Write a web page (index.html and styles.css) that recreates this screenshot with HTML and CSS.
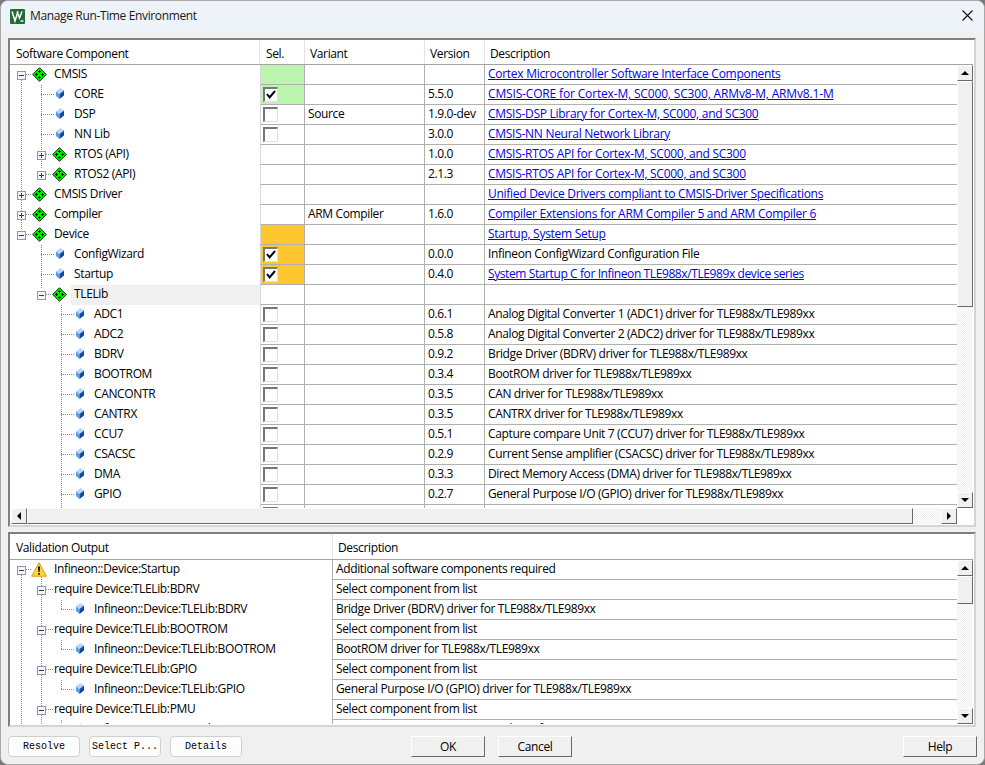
FILE: index.html
```html
<!DOCTYPE html>
<html lang="en">
<head>
<meta charset="utf-8">
<title>Manage Run-Time Environment</title>
<link rel="stylesheet" href="styles.css">
</head>
<body>
<svg class="defs" width="0" height="0" aria-hidden="true">
  <symbol id="dia" viewBox="0 0 15 15">
    <path d="M7.5 .7 14.3 7.5 7.5 14.3 .7 7.5Z" fill="#00f000" stroke="#0a2a0a" stroke-width="1"/>
    <path d="M7 3h1v1h1v1H8v1H7V5H6V4h1ZM7 9h1v1h1v1H8v1H7v-1H6v-1h1ZM4 6h1v1h1v1H5v1H4V8H3V7h1ZM10 6h1v1h1v1h-1v1h-1V8H9V7h1Z" fill="#000"/>
  </symbol>
  <symbol id="leaf" viewBox="0 0 8 11">
    <path d="M4.5 0 8 2.5 3.5 6 0 3.5Z" fill="#b4d8fa"/>
    <path d="M0 3.5 3.5 6V11L0 8Z" fill="#5c9de8"/>
    <path d="M8 2.5 3.5 6V11L8 7.5Z" fill="#1547a8"/>
  </symbol>
  <symbol id="minus" viewBox="0 0 9 9">
    <rect x=".5" y=".5" width="8" height="8" fill="#f4f6fa" stroke="#8d97ad"/>
    <path d="M2 4.5H7" stroke="#2a3a70"/>
  </symbol>
  <symbol id="plus" viewBox="0 0 9 9">
    <rect x=".5" y=".5" width="8" height="8" fill="#f4f6fa" stroke="#8d97ad"/>
    <path d="M2 4.5H7M4.5 2V7" stroke="#2a3a70"/>
  </symbol>
  <symbol id="warn" viewBox="0 0 16 15">
    <path d="M8 .8 15.4 14.2H.6Z" fill="#fdd835" stroke="#d59a1c" stroke-linejoin="round"/>
    <path d="M7 4.5h2L8.6 10H7.4ZM7.2 11h1.6v1.7H7.2Z" fill="#000"/>
  </symbol>
  <symbol id="chk" viewBox="0 0 10 9">
    <path d="M1 4 3.6 7.4 9 1" fill="none" stroke="#000" stroke-width="2"/>
  </symbol>
</svg>

<div class="window">
  <header class="titlebar">
    <svg class="applogo" viewBox="0 0 15 15" width="15" height="15" aria-hidden="true">
      <rect width="15" height="15" rx="1" fill="#256b34"/>
      <path d="M2 2.5 5 12 8 2.5M7 2.5 9.5 9 12 2.5" fill="none" stroke="#fff" stroke-width="1.5"/>
      <path d="M10.5 12h3" stroke="#dfe" stroke-width="1.4"/>
    </svg>
    <span class="title">Manage Run-Time Environment</span>
    <svg class="close" viewBox="0 0 11 11" width="11" height="11" aria-hidden="true"><path d="M.5 .5 10.5 10.5M10.5 .5 .5 10.5" stroke="#111" stroke-width="1.1"/></svg>
  </header>

  <section class="panel panel-top">
    <div class="row head head-top">
      <div class="hc c-tree">Software Component</div>
      <div class="hc c-sel">Sel.</div>
      <div class="hc c-var">Variant</div>
      <div class="hc c-ver">Version</div>
      <div class="hc c-desc">Description</div>
    </div>
    <div class="body">
      <div class="list">
        <svg class="guides" width="250" height="443" aria-hidden="true">
          <path d="M11.5 15V164M31.5 20V104M31.5 180V224M51.5 240V443M31 29.5H45M31 49.5H45M31 69.5H45M31 189.5H45M31 209.5H45M51 249.5H65M51 269.5H65M51 289.5H65M51 309.5H65M51 329.5H65M51 349.5H65M51 369.5H65M51 389.5H65M51 409.5H65M51 429.5H65M16 9.5H22M16 129.5H22M16 149.5H22M16 169.5H22M36 89.5H42M36 109.5H42M36 229.5H42"/>
        </svg>

        <div class="row">
          <div class="tree l0"><svg class="exp"><use href="#minus"/></svg><svg class="dia"><use href="#dia"/></svg><span class="lbl">CMSIS</span></div>
          <div class="sel green"></div><div class="var"></div><div class="ver"></div>
          <div class="desc"><a href="#">Cortex Microcontroller Software Interface Components</a></div>
        </div>
        <div class="row">
          <div class="tree l1leaf"><svg class="leaf"><use href="#leaf"/></svg><span class="lbl">CORE</span></div>
          <div class="sel green"><span class="cb on"><svg><use href="#chk"/></svg></span></div><div class="var"></div><div class="ver">5.5.0</div>
          <div class="desc"><a href="#" class="wide">CMSIS-CORE for Cortex-M, SC000, SC300, ARMv8-M, ARMv8.1-M</a></div>
        </div>
        <div class="row">
          <div class="tree l1leaf"><svg class="leaf"><use href="#leaf"/></svg><span class="lbl">DSP</span></div>
          <div class="sel"><span class="cb"></span></div><div class="var">Source</div><div class="ver">1.9.0-dev</div>
          <div class="desc"><a href="#">CMSIS-DSP Library for Cortex-M, SC000, and SC300</a></div>
        </div>
        <div class="row">
          <div class="tree l1leaf"><svg class="leaf"><use href="#leaf"/></svg><span class="lbl">NN Lib</span></div>
          <div class="sel"><span class="cb"></span></div><div class="var"></div><div class="ver">3.0.0</div>
          <div class="desc"><a href="#">CMSIS-NN Neural Network Library</a></div>
        </div>
        <div class="row">
          <div class="tree l1"><svg class="exp"><use href="#plus"/></svg><svg class="dia"><use href="#dia"/></svg><span class="lbl">RTOS (API)</span></div>
          <div class="sel"></div><div class="var"></div><div class="ver">1.0.0</div>
          <div class="desc"><a href="#">CMSIS-RTOS API for Cortex-M, SC000, and SC300</a></div>
        </div>
        <div class="row">
          <div class="tree l1"><svg class="exp"><use href="#plus"/></svg><svg class="dia"><use href="#dia"/></svg><span class="lbl">RTOS2 (API)</span></div>
          <div class="sel"></div><div class="var"></div><div class="ver">2.1.3</div>
          <div class="desc"><a href="#">CMSIS-RTOS API for Cortex-M, SC000, and SC300</a></div>
        </div>
        <div class="row">
          <div class="tree l0"><svg class="exp"><use href="#plus"/></svg><svg class="dia"><use href="#dia"/></svg><span class="lbl">CMSIS Driver</span></div>
          <div class="sel"></div><div class="var"></div><div class="ver"></div>
          <div class="desc"><a href="#">Unified Device Drivers compliant to CMSIS-Driver Specifications</a></div>
        </div>
        <div class="row">
          <div class="tree l0"><svg class="exp"><use href="#plus"/></svg><svg class="dia"><use href="#dia"/></svg><span class="lbl">Compiler</span></div>
          <div class="sel"></div><div class="var">ARM Compiler</div><div class="ver">1.6.0</div>
          <div class="desc"><a href="#">Compiler Extensions for ARM Compiler 5 and ARM Compiler 6</a></div>
        </div>
        <div class="row">
          <div class="tree l0"><svg class="exp"><use href="#minus"/></svg><svg class="dia"><use href="#dia"/></svg><span class="lbl">Device</span></div>
          <div class="sel orange"></div><div class="var"></div><div class="ver"></div>
          <div class="desc"><a href="#">Startup, System Setup</a></div>
        </div>
        <div class="row">
          <div class="tree l1leaf"><svg class="leaf"><use href="#leaf"/></svg><span class="lbl">ConfigWizard</span></div>
          <div class="sel orange"><span class="cb on"><svg><use href="#chk"/></svg></span></div><div class="var"></div><div class="ver">0.0.0</div>
          <div class="desc">Infineon ConfigWizard Configuration File</div>
        </div>
        <div class="row">
          <div class="tree l1leaf"><svg class="leaf"><use href="#leaf"/></svg><span class="lbl">Startup</span></div>
          <div class="sel orange"><span class="cb on"><svg><use href="#chk"/></svg></span></div><div class="var"></div><div class="ver">0.4.0</div>
          <div class="desc"><a href="#" class="tight">System Startup C for Infineon TLE988x/TLE989x device series</a></div>
        </div>
        <div class="row">
          <div class="tree l1"><svg class="exp"><use href="#minus"/></svg><svg class="dia"><use href="#dia"/></svg><span class="lbl current">TLELib</span></div>
          <div class="sel"></div><div class="var"></div><div class="ver"></div>
          <div class="desc"></div>
        </div>
        <div class="row">
          <div class="tree l2leaf"><svg class="leaf"><use href="#leaf"/></svg><span class="lbl">ADC1</span></div>
          <div class="sel"><span class="cb"></span></div><div class="var"></div><div class="ver">0.6.1</div>
          <div class="desc">Analog Digital Converter 1 (ADC1) driver for TLE988x/TLE989xx</div>
        </div>
        <div class="row">
          <div class="tree l2leaf"><svg class="leaf"><use href="#leaf"/></svg><span class="lbl">ADC2</span></div>
          <div class="sel"><span class="cb"></span></div><div class="var"></div><div class="ver">0.5.8</div>
          <div class="desc">Analog Digital Converter 2 (ADC2) driver for TLE988x/TLE989xx</div>
        </div>
        <div class="row">
          <div class="tree l2leaf"><svg class="leaf"><use href="#leaf"/></svg><span class="lbl">BDRV</span></div>
          <div class="sel"><span class="cb"></span></div><div class="var"></div><div class="ver">0.9.2</div>
          <div class="desc">Bridge Driver (BDRV) driver for TLE988x/TLE989xx</div>
        </div>
        <div class="row">
          <div class="tree l2leaf"><svg class="leaf"><use href="#leaf"/></svg><span class="lbl">BOOTROM</span></div>
          <div class="sel"><span class="cb"></span></div><div class="var"></div><div class="ver">0.3.4</div>
          <div class="desc">BootROM driver for TLE988x/TLE989xx</div>
        </div>
        <div class="row">
          <div class="tree l2leaf"><svg class="leaf"><use href="#leaf"/></svg><span class="lbl">CANCONTR</span></div>
          <div class="sel"><span class="cb"></span></div><div class="var"></div><div class="ver">0.3.5</div>
          <div class="desc">CAN driver for TLE988x/TLE989xx</div>
        </div>
        <div class="row">
          <div class="tree l2leaf"><svg class="leaf"><use href="#leaf"/></svg><span class="lbl">CANTRX</span></div>
          <div class="sel"><span class="cb"></span></div><div class="var"></div><div class="ver">0.3.5</div>
          <div class="desc">CANTRX driver for TLE988x/TLE989xx</div>
        </div>
        <div class="row">
          <div class="tree l2leaf"><svg class="leaf"><use href="#leaf"/></svg><span class="lbl">CCU7</span></div>
          <div class="sel"><span class="cb"></span></div><div class="var"></div><div class="ver">0.5.1</div>
          <div class="desc">Capture compare Unit 7 (CCU7) driver for TLE988x/TLE989xx</div>
        </div>
        <div class="row">
          <div class="tree l2leaf"><svg class="leaf"><use href="#leaf"/></svg><span class="lbl">CSACSC</span></div>
          <div class="sel"><span class="cb"></span></div><div class="var"></div><div class="ver">0.2.9</div>
          <div class="desc">Current Sense amplifier (CSACSC) driver for TLE988x/TLE989xx</div>
        </div>
        <div class="row">
          <div class="tree l2leaf"><svg class="leaf"><use href="#leaf"/></svg><span class="lbl">DMA</span></div>
          <div class="sel"><span class="cb"></span></div><div class="var"></div><div class="ver">0.3.3</div>
          <div class="desc">Direct Memory Access (DMA) driver for TLE988x/TLE989xx</div>
        </div>
        <div class="row">
          <div class="tree l2leaf"><svg class="leaf"><use href="#leaf"/></svg><span class="lbl">GPIO</span></div>
          <div class="sel"><span class="cb"></span></div><div class="var"></div><div class="ver">0.2.7</div>
          <div class="desc">General Purpose I/O (GPIO) driver for TLE988x/TLE989xx</div>
        </div>
        <div class="row">
          <div class="tree l2leaf"><svg class="leaf"><use href="#leaf"/></svg></div>
          <div class="sel"><span class="cb"></span></div><div class="var"></div><div class="ver"></div>
          <div class="desc"></div>
        </div>
      </div>
      <div class="vbar">
        <span class="sbtn"><i class="up"></i></span>
        <span class="thumb thumb-top"></span>
        <span class="track"></span>
        <span class="sbtn"><i class="down"></i></span>
      </div>
    </div>
    <div class="hbar">
      <span class="sbtn"><i class="left"></i></span>
      <span class="thumb hthumb"></span>
      <span class="track"></span>
      <span class="sbtn"><i class="right"></i></span>
    </div>
  </section>

  <section class="panel panel-bottom">
    <div class="row head head-bottom">
      <div class="hc c-vtree">Validation Output</div>
      <div class="hc c-vdesc">Description</div>
    </div>
    <div class="body">
      <div class="list">
        <svg class="guides" width="322" height="165" aria-hidden="true">
          <path d="M11.5 15V165M31.5 15V165M51.5 40V49M51.5 80V89M51.5 120V129M51.5 160V165M51 49.5H65M51 89.5H65M51 129.5H65M16 9.5H21M36 29.5H44M36 69.5H44M36 109.5H44M36 149.5H44"/>
        </svg>
        <div class="row">
          <div class="vtree l0"><svg class="exp"><use href="#minus"/></svg><svg class="warn"><use href="#warn"/></svg><span class="lbl">Infineon::Device:Startup</span></div>
          <div class="vdesc">Additional software components required</div>
        </div>
        <div class="row">
          <div class="vtree l1req"><svg class="exp"><use href="#minus"/></svg><span class="lbl">require Device:TLELib:BDRV</span></div>
          <div class="vdesc">Select component from list</div>
        </div>
        <div class="row">
          <div class="vtree l2leaf"><svg class="leaf"><use href="#leaf"/></svg><span class="lbl">Infineon::Device:TLELib:BDRV</span></div>
          <div class="vdesc">Bridge Driver (BDRV) driver for TLE988x/TLE989xx</div>
        </div>
        <div class="row">
          <div class="vtree l1req"><svg class="exp"><use href="#minus"/></svg><span class="lbl">require Device:TLELib:BOOTROM</span></div>
          <div class="vdesc">Select component from list</div>
        </div>
        <div class="row">
          <div class="vtree l2leaf"><svg class="leaf"><use href="#leaf"/></svg><span class="lbl">Infineon::Device:TLELib:BOOTROM</span></div>
          <div class="vdesc">BootROM driver for TLE988x/TLE989xx</div>
        </div>
        <div class="row">
          <div class="vtree l1req"><svg class="exp"><use href="#minus"/></svg><span class="lbl">require Device:TLELib:GPIO</span></div>
          <div class="vdesc">Select component from list</div>
        </div>
        <div class="row">
          <div class="vtree l2leaf"><svg class="leaf"><use href="#leaf"/></svg><span class="lbl">Infineon::Device:TLELib:GPIO</span></div>
          <div class="vdesc">General Purpose I/O (GPIO) driver for TLE988x/TLE989xx</div>
        </div>
        <div class="row">
          <div class="vtree l1req"><svg class="exp"><use href="#minus"/></svg><span class="lbl">require Device:TLELib:PMU</span></div>
          <div class="vdesc">Select component from list</div>
        </div>
        <div class="row">
          <div class="vtree l2leaf"><svg class="leaf"><use href="#leaf"/></svg><span class="lbl">Infineon::Device:TLELib:PMU</span></div>
          <div class="vdesc">Power Management Unit (PMU) driver for TLE988x/TLE989xx</div>
        </div>
      </div>
      <div class="vbar">
        <span class="sbtn"><i class="up"></i></span>
        <span class="thumb thumb-bottom"></span>
        <span class="track"></span>
        <span class="sbtn"><i class="down"></i></span>
      </div>
    </div>
  </section>

  <footer class="footer">
    <div class="tools">
      <button class="tool">Resolve</button>
      <button class="tool">Select P...</button>
      <button class="tool">Details</button>
    </div>
    <button class="btn ok">OK</button>
    <button class="btn cancel">Cancel</button>
    <button class="btn help">Help</button>
  </footer>
</div>
</body>
</html>
```

FILE: styles.css
```css
* { box-sizing: border-box; }
html, body { margin: 0; padding: 0; height: 100%; background: #7a7a7a; overflow: hidden; }
body { font: 12px/20px "Open Sans", "Noto Sans", sans-serif; color: #000; letter-spacing: -0.36px; }
.defs { position: absolute; }

.window { width: 985px; height: 765px; background: #f0f0f0; border: 1px solid #a8a8a8; border-radius: 8px; overflow: hidden; display: flex; flex-direction: column; }

.titlebar { height: 31px; flex: none; background: #eef2f9; display: flex; align-items: center; padding-left: 9px; padding-right: 11px; }
.applogo { margin-top: -1px; flex: none; }
.title { margin-left: 5px; color: #1a1a1a; margin-top: -1px; flex: 1; }
.close { flex: none; margin-top: -2px; }

.panel { margin: 6px 0 0 7px; width: 968px; background: #fff; border: 2px solid; border-color: #808080 #d4d4d4 #d4d4d4 #808080; display: flex; flex-direction: column; flex: none; }
.panel-top { height: 489px; }
.panel-bottom { height: 195px; margin-top: 5px; }

.row { display: flex; height: 20px; flex: none; }
.head { background: #fff; border-bottom: 1px solid #a3a3a3; margin-right: 1px; }
.head-top { height: 25px; }
.head-bottom { height: 26px; }
.hc { line-height: 27px; padding-left: 6px; border-right: 1px solid #e4e4e4; flex: none; }
.head-bottom .hc { line-height: 28px; }
.c-tree { width: 250px; border-right-color: #e4e4e4; }
.c-sel { width: 45px; }
.c-var { width: 120px; padding-left: 5px; }
.c-ver { width: 60px; padding-left: 5px; }
.c-desc { flex: 1; border-right: 0; padding-left: 5px; }
.c-vtree { width: 323px; }
.c-vdesc { flex: 1; padding-left: 5px; border-right: 0; }

.body { flex: 1; display: flex; min-height: 0; padding-right: 1px; }
.panel-bottom .body { height: 164px; flex: none; }
.list { position: relative; flex: 1; overflow: hidden; }
.guides { position: absolute; left: 0; top: 0; }
.guides path { fill: none; stroke: #8a8a8a; stroke-dasharray: 1 1; shape-rendering: crispEdges; }

.tree { width: 250px; flex: none; display: flex; align-items: center; white-space: nowrap; }
.vtree { width: 322px; flex: none; display: flex; align-items: center; white-space: nowrap; }
.l0 { padding-left: 7px; }
.l1 { padding-left: 27px; }
.l1leaf { padding-left: 46px; }
.l2leaf { padding-left: 66px; }
.l1req { padding-left: 27px; }

.exp { width: 9px; height: 9px; flex: none; position: relative; margin-right: 6px; }
.dia { width: 15px; height: 15px; flex: none; position: relative; margin-right: 7px; margin-top: -1px; }
.warn { width: 16px; height: 15px; flex: none; position: relative; margin-left: -1px; margin-right: 7px; margin-top: -2px; }
.leaf { width: 8px; height: 11px; flex: none; position: relative; margin-right: 10px; margin-top: -3px; }
.l1req .exp { margin-right: 8px; }
.lbl { line-height: 19px; margin-top: -3px; position: relative; }
.current { flex: 1; background: #f0f0f0; margin-left: -3px; padding-left: 3px; height: 20px; line-height: 18px; margin-top: 0; }

.sel, .var, .ver, .desc, .vdesc { border-bottom: 1px solid #b0b0b0; border-right: 1px solid #b0b0b0; white-space: nowrap; overflow: hidden; line-height: 18px; padding-left: 3px; flex: none; }
.sel { width: 45px; border-left: 1px solid #d8d8d8; padding-left: 2px; display: flex; align-items: center; }
.var { width: 120px; }
.ver { width: 60px; }
.desc { flex: 1; border-right: 0; }
.vdesc { flex: 1; border-left: 1px solid #b0b0b0; border-right: 0; }
.green { background: #bcf5ae; }
.orange { background: #ffc72f; }
a { color: #0000ee; text-decoration: underline; letter-spacing: -0.28px; }
a.wide { letter-spacing: -0.16px; }
a.tight { letter-spacing: -0.4px; }

.cb { width: 15px; height: 15px; background: #fff; border: 1px solid #e0e0e0; border-top: 2px solid #787878; border-left: 2px solid #787878; display: flex; align-items: center; justify-content: center; margin-top: -1px; }
.cb svg { width: 10px; height: 9px; }

.vbar { width: 16px; flex: none; display: flex; flex-direction: column; }
.hbar { height: 16px; flex: none; display: flex; margin: 0 17px 1px 1px; }
.sbtn { width: 16px; height: 16px; flex: none; background: #f0f0f0; border: 1px solid; border-color: #fff #696969 #696969 #fff; display: flex; align-items: center; justify-content: center; }
.sbtn i { display: block; width: 0; height: 0; border: 4px solid transparent; }
.up { border-bottom-color: #000 !important; border-top-width: 0 !important; }
.down { border-top-color: #000 !important; border-bottom-width: 0 !important; }
.left { border-right-color: #000 !important; border-left-width: 0 !important; }
.right { border-left-color: #000 !important; border-right-width: 0 !important; }
.thumb { background: #f0f0f0; border: 1px solid; border-color: #fff #696969 #696969 #fff; flex: none; }
.thumb-top { height: 226px; }
.thumb-bottom { height: 28px; }
.hthumb { width: 886px; }
.track { flex: 1; background: repeating-conic-gradient(#f0f0f0 0 25%, #fff 0 50%) 0 0 / 2px 2px; }

.footer { display: flex; align-items: flex-start; margin-top: 9px; padding: 0 7px; }
.tools { display: flex; gap: 9px; }
.tool { width: 72px; height: 21px; padding: 0; background: #fdfdfd; border: 1px solid #d0d0d0; border-radius: 4px; font: 10px/19px "Liberation Mono", monospace; letter-spacing: 0; color: #000; }
.btn { width: 74px; height: 21px; padding: 0; background: #f0f0f0; border: 1px solid; border-color: #fff #696969 #696969 #fff; font: 12px/19px "Open Sans", sans-serif; letter-spacing: -0.36px; color: #000; }
.ok { margin-left: 169px; }
.cancel { margin-left: 13px; }
.help { margin-left: auto; }
```
